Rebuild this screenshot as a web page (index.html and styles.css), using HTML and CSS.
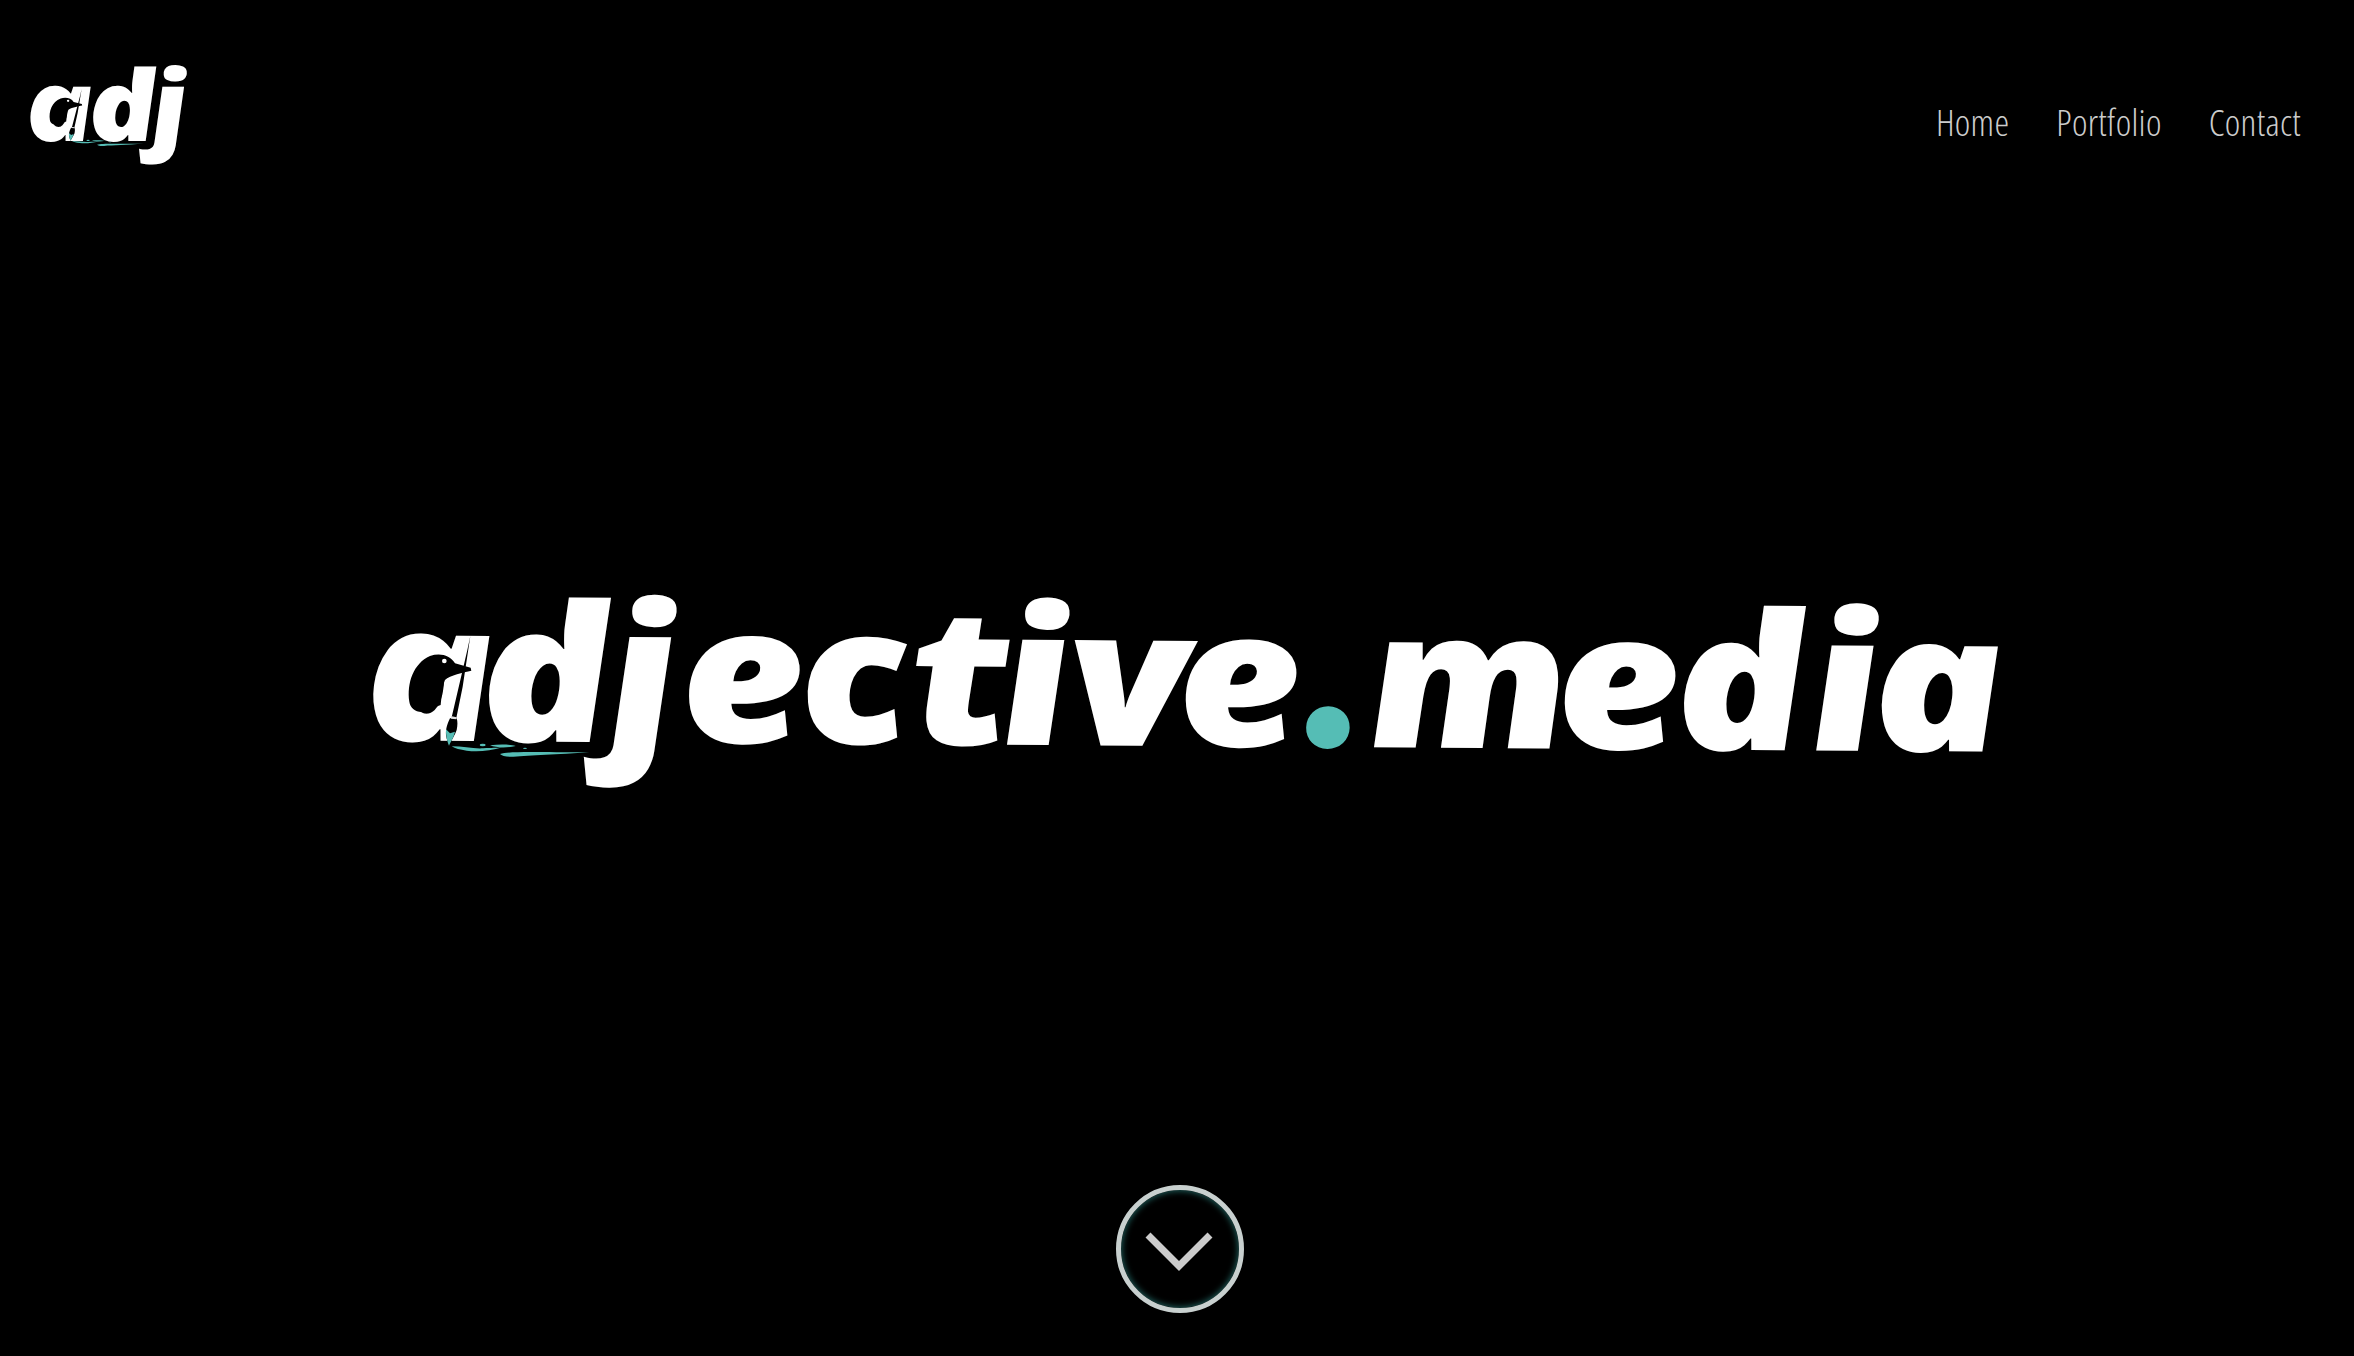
FILE: index.html
```html
<!DOCTYPE html>
<html lang="en">
<head>
<meta charset="utf-8">
<title>adjective.media</title>
<link rel="stylesheet" href="styles.css">
</head>
<body>
<svg class="defs" width="0" height="0" aria-hidden="true">
  <symbol id="bird" viewBox="0 0 1020 720" preserveAspectRatio="none">
    <path fill="#000" d="M178 395C170 340 190 280 240 258C270 248 300 255 315 280L362 293L364 302C340 308 300 315 285 330C278 345 275 380 272 405C250 412 235 425 215 426C195 426 180 412 178 395Z"/>
    <circle cx="283" cy="273" r="7" fill="#fff"/>
    <path fill="#000" d="M361 198L352 240L305 442L319 444L338 350Z"/>
    <path fill="#000" d="M300 445C290 465 287 480 288 495C290 510 295 520 297 527C305 510 315 495 320 480C323 465 323 455 320 445Z"/>
    <path fill="#ddd" d="M305 439L320 442L319 448L303 446Z"/>
    <path fill="#55bdb5" d="M288 478L300 490L315 485C310 505 302 515 297 527C292 515 287 495 288 478Z"/>
    <path fill="#55bdb5" d="M305 529C340 529 370 537 400 535C425 533 440 535 458 532C420 542 385 547 350 542C330 539 315 536 305 529Z"/>
    <path fill="#55bdb5" d="M420 526C450 522 480 523 497 528C470 534 440 534 420 526Z"/>
    <ellipse cx="398" cy="525" rx="9" ry="4" fill="#55bdb5"/>
    <ellipse cx="525" cy="535" rx="6" ry="2" fill="#55bdb5"/>
    <path fill="#55bdb5" d="M450 552C480 543 560 547 718 547C620 553 540 557 490 560C470 561 455 558 450 552Z"/>
  </symbol>
</svg>
<div class="page">
  <header class="top">
    <a class="brand" href="#"><span class="tilt">adj</span><svg class="brand-bird"><use href="#bird"/></svg></a>
    <nav class="nav">
      <a href="#">Home</a>
      <a href="#">Portfolio</a>
      <a href="#">Contact</a>
    </nav>
  </header>
  <main class="hero">
    <div class="mark">
      <h1 class="word"><span class="l-a">a</span><span class="l-d">d</span><span class="l-j">j</span><span class="l-e">e</span><span class="l-c">c</span><span class="l-t">t</span><span class="l-i">i</span><span class="l-v">v</span><span class="l-e2">e</span><span class="dot">.</span><span class="l-m">m</span><span class="l-e3">e</span><span class="l-d2">d</span><span class="l-i2">i</span><span class="l-a2">a</span></h1>
      <svg class="mark-bird"><use href="#bird"/></svg>
    </div>
  </main>
  <footer class="foot">
    <a class="down" href="#" aria-label="Scroll down">
      <svg viewBox="0 0 128 128" width="128" height="128"><path d="M32 50 L63 81 L94 50" fill="none" stroke="#ccc" stroke-width="7"/></svg>
    </a>
  </footer>
</div>
</body>
</html>
```
FILE: styles.css
```css
html, body { margin: 0; background: #000; }
.defs { position: absolute; }
.page { width: 2354px; height: 1356px; display: flex; flex-direction: column; background: #000; overflow: hidden; }
.top { display: flex; justify-content: space-between; align-items: flex-start; height: 240px; padding: 54px 53px 0 28px; box-sizing: border-box; }
.brand { position: relative; display: block; font: italic 780 98px/1 "Open Sans", sans-serif; letter-spacing: -6px; color: #fff; text-decoration: none; }
.tilt { display: inline-block; transform: skewX(6deg) scaleX(1.17); transform-origin: 0 88%; }
.brand-bird { position: absolute; left: -9px; top: 4px; width: 177px; height: 113px; }
.nav { display: flex; gap: 47px; margin-top: 49px; }
.nav a { font: 300 37px/1 "Open Sans", sans-serif; font-stretch: condensed; letter-spacing: .3px; color: #ccc; text-decoration: none; }
.hero { flex: 1; display: flex; justify-content: center; align-items: center; padding: 0 0 80px 6px; }
.mark { position: relative; }
.word { margin: 0; font: italic 780 190px/1 "Open Sans", sans-serif; letter-spacing: -3.5px; color: #fff; white-space: nowrap; transform: rotate(.4deg) skewX(6deg) scaleX(1.16); }
.l-d { margin-left: -12px; }
.l-j { margin-left: -2px; }
.l-e { margin-left: 5px; }
.l-c { margin-left: -4px; }
.l-t { margin-left: 6px; }
.l-i { margin-left: -8px; }
.l-v { margin-left: 3px; }
.l-e2 { margin-left: -9px; }
.l-m { margin-left: 9px; }
.l-e3 { margin-left: -10px; }
.l-d2 { margin-left: -4px; }
.l-i2 { margin-left: 5px; }
.l-a2 { margin-left: -4px; }
.dot { display: inline-block; font-family: "Lato", sans-serif; font-style: normal; font-weight: 900; color: #55bdb5; font-size: 268px; line-height: 0; letter-spacing: 0; margin: 0 -14px 0 -1px; transform: skewX(-6deg) scaleX(.86); }
.mark-bird { position: absolute; left: calc(50% - 830px); top: -8px; width: 340px; height: 240px; }
.foot { display: flex; justify-content: center; padding: 0 0 43px 6px; }
.down { width: 128px; height: 128px; box-sizing: border-box; border-radius: 50%; border: 5px solid #c8d0cf; box-shadow: inset 0 0 6px 1px #1f5f5c; display: block; position: relative; }
.down svg { position: absolute; left: -5px; top: -5px; }
```
